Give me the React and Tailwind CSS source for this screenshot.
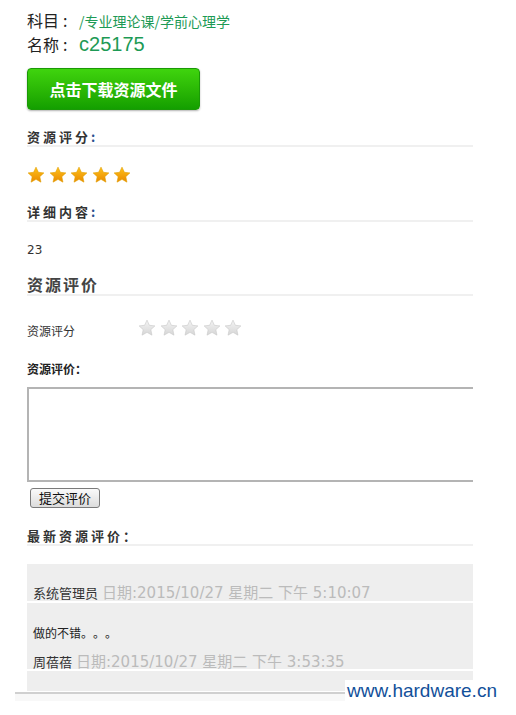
const CJK = { fontFamily: '"Noto Sans CJK SC", "Liberation Sans", sans-serif' };
const DATE = { fontFamily: '"DejaVu Sans", "Noto Sans CJK SC", sans-serif' };

function Star({ gold }) {
  return (
    <svg width="18" height="18" viewBox="0 0 24 24">
      <defs>
        <linearGradient id={gold ? "sg" : "sw"} x1="0" y1="0" x2="0" y2="1">
          <stop offset="0" stopColor={gold ? "#ffc21a" : "#f4f4f4"} />
          <stop offset="1" stopColor={gold ? "#e98a00" : "#d6d6d6"} />
        </linearGradient>
      </defs>
      <path
        d="M12 1.5l3.2 6.9 7.3.8-5.4 5 1.5 7.3L12 17.8l-6.6 3.7 1.5-7.3-5.4-5 7.3-.8z"
        fill={gold ? "url(#sg)" : "url(#sw)"}
        stroke={gold ? "#e0a000" : "#c8c8c8"}
        strokeWidth="0.8"
        strokeLinejoin="round"
      />
    </svg>
  );
}

function Heading({ children, colon }) {
  return (
    <div className="border-b-2 border-[#f0f0f0] text-[13px] font-bold tracking-[3px] text-[#333] leading-[16px]">
      {children}
      {colon && <span className="text-[#2a4f8f]">:</span>}
    </div>
  );
}

export default function App() {
  return (
    <div className="relative h-[715px] w-[516px] overflow-hidden bg-white [text-spacing-trim:space-all]" style={CJK}>
      <div className="ml-[27px] w-[446px] pt-[8px]">
        <div className="flex items-baseline h-[24px] leading-[24px]">
          <span className="text-[16px] text-[#222]">科目</span>
          <span className="w-[20px] pl-[4px] text-[16px] text-[#222]">:</span>
          <span className="text-[14px] text-[#1d9a55]">/专业理论课/学前心理学</span>
        </div>
        <div className="flex items-baseline h-[24px] leading-[24px]">
          <span className="text-[16px] text-[#222]">名称</span>
          <span className="w-[20px] pl-[4px] text-[16px] text-[#222]">:</span>
          <span className="text-[20px] text-[#1d9a55]" style={{ fontFamily: '"Liberation Sans", sans-serif' }}>c25175</span>
        </div>
        <button className="mt-[12px] flex h-[42px] w-[173px] items-center justify-center rounded-[4px] border border-[#1a9a06] bg-gradient-to-b from-[#3fd40e] to-[#139f00] text-[16px] font-bold text-white shadow-[0_1px_2px_rgba(0,0,0,0.3)]">
          点击下载资源文件
        </button>

        <div className="mt-[19px]">
          <Heading colon>资源评分</Heading>
        </div>
        <div className="mt-[19px] flex gap-[3.5px]">
          {[0, 1, 2, 3, 4].map((i) => (
            <Star key={i} gold />
          ))}
        </div>

        <div className="mt-[20px]">
          <Heading colon>详细内容</Heading>
        </div>
        <div className="mt-[20px] text-[12px] text-[#333] leading-[16px]" style={DATE}>23</div>

        <div className="mt-[16px] border-b-2 border-[#f0f0f0] text-[16px] font-bold tracking-[2px] text-[#444] leading-[20px]">
          资源评价
        </div>

        <div className="mt-[23px] flex items-start">
          <span className="w-[111px] pt-[4px] text-[12px] leading-[16px] text-[#333]">资源评分</span>
          <div className="flex gap-[3.5px]">
            {[0, 1, 2, 3, 4].map((i) => (
              <Star key={i} />
            ))}
          </div>
        </div>

        <div className="mt-[22px] text-[12px] font-bold text-[#222] leading-[16px]">资源评价：</div>

        <div className="mt-[10px] overflow-hidden">
          <textarea className="block h-[95px] w-[480px] resize-none border-2 border-r-0 border-[#b4b4b4] bg-white" />
        </div>

        <button className="ml-[3px] mt-[6px] h-[20px] rounded-[3px] border border-[#7a7a7a] bg-gradient-to-b from-[#fafafa] to-[#dcdcdc] px-[8px] text-[13px] leading-[16px] text-[#111]">
          提交评价
        </button>

        <div className="mt-[20px]">
          <Heading>最新资源评价：</Heading>
        </div>

        <div className="mt-[18px] bg-[#eeeeee] pb-[20px]">
          <div className="flex h-[39px] items-end border-b-2 border-white px-[6px] leading-[16px]">
            <span className="text-[13px] text-[#333]">系统管理员</span>
            <span className="ml-[4px] text-[15px] text-[#bbbbbb]" style={DATE}>
              日期:2015/10/27 星期二 下午 5:10:07
            </span>
          </div>
          <div className="px-[6px] pt-[22px] text-[12px] leading-[16px] text-[#222]">做的不错。。。</div>
          <div className="flex h-[30px] items-end border-b-2 border-white px-[6px] leading-[14px]">
            <span className="text-[13px] text-[#333]">周蓓蓓</span>
            <span className="ml-[4px] text-[15px] text-[#bbbbbb]" style={DATE}>
              日期:2015/10/27 星期二 下午 3:53:35
            </span>
          </div>
        </div>
      </div>

      <div className="ml-[15px] mt-[1px] h-[9px] w-[460px] border-t-2 border-[#d0d0d0] bg-[#f8f8f8]" />

      <div
        className="absolute left-[345px] top-[680px] bg-white pl-[2px] text-[19px] leading-[22px] text-[#12509a]"
        style={{ fontFamily: '"Liberation Sans", sans-serif' }}
      >
        www.hardware.cn
      </div>
    </div>
  );
}
